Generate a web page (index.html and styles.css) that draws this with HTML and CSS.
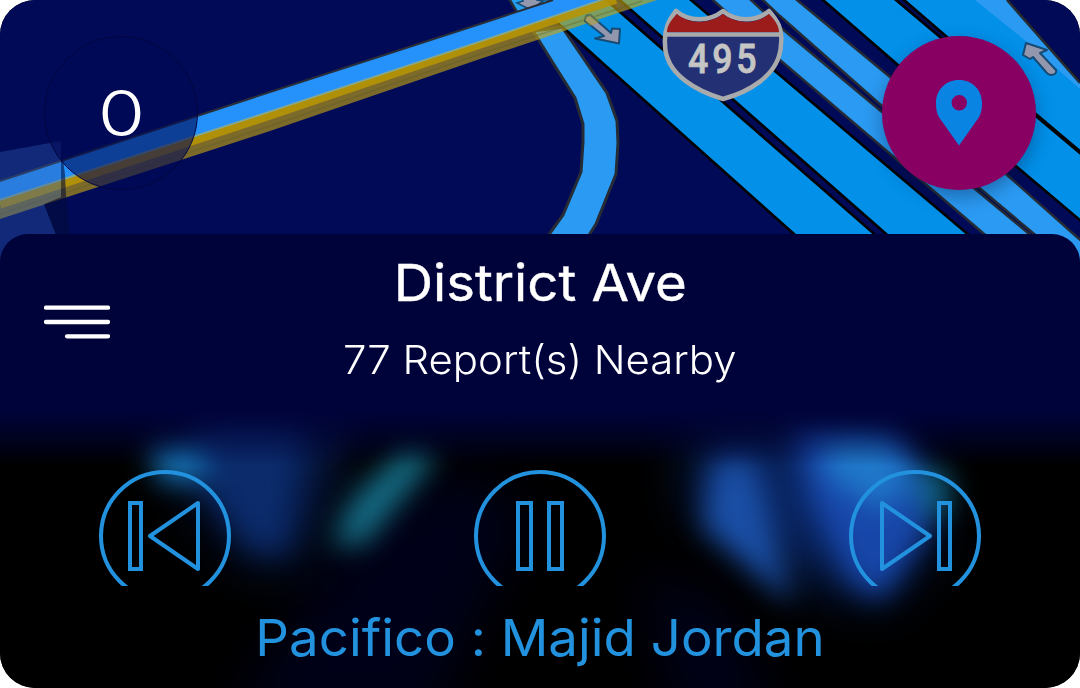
FILE: index.html
```html
<!DOCTYPE html>
<html lang="en">
<head>
<meta charset="utf-8">
<title>Drive</title>
<link rel="stylesheet" href="styles.css">
</head>
<body>
<main class="widget">
  <section class="map">
    <svg class="map-art" viewBox="0 0 1080 270" aria-hidden="true">
      <rect width="1080" height="270" fill="#000a57"/>
      <!-- highway lanes -->
      <g fill="#0290e9" stroke="#000" stroke-width="2.6">
        <path d="M532 0L794 234L830 266L911 266L612 5L600 -8Z"/>
        <path d="M614 -5L885 233L920 264L1003 264L691 0L680 -9Z"/>
        <path d="M813 -9L823 0L898 65L1017 167L1100 237V170L1037 117L940 37L896 0L884 -10Z"/>
        <path d="M894 -9L904 0L947 37L1037 115L1100 168V105L1007 0L998 -10Z"/>
      </g>
      <path d="M975 0L1027 42L1080 89V83L1007 0Z" fill="#2b9af2"/>
      <path d="M1007 0L1080 83" stroke="#262c36" stroke-width="2.6"/>
      <g fill="#2b9af2" stroke="#262c36" stroke-width="2.4">
        <path d="M703 -9L713 0L780 60L983 233L1020 265H1067L1028 233L882 112L780 27L751 0L740 -9Z"/>
        <path d="M752 -9L763 0L780 16L882 106L1033 233L1070 264H1108L1078 238L1007 175L890 77L797 0L786 -9Z"/>
      </g>
      <!-- ramp -->
      <path d="M562 27L607 93L617 121L618 143L616 174L596 224L586 240H545L563 215L581 172L583 142L583 124L575 98L553 63L533 31Z" fill="#2b9af2" stroke="#262c36" stroke-width="3"/>
      <path d="M566 30L600 61" stroke="#000" stroke-width="2.6"/>
      <path d="M508 -3L518 14L560 0Z" fill="#24a0ee" stroke="#262c36" stroke-width="2.6"/>
      <path d="M523 -8V1L517 3L531 10L543 1L537 0V-8Z" fill="#9297ad" stroke="#174b75" stroke-width="1.6"/>
      <!-- toll road -->
      <path d="M0 181L197 116L270 92L480 24L553 0H608L480 43L270 113L0 201Z" fill="#2591fa"/>
      <path d="M0 181L197 116L270 92L480 24L553 0" fill="none" stroke="#282d38" stroke-width="2"/>
      <path d="M0 199L270 111L480 41L600 0H657L480 59L270 131L0 219Z" fill="#c7a70e" fill-opacity=".62"/>
      <path d="M0 205L270 116L480 45L616 0" fill="none" stroke="#b79405" stroke-width="7.5" stroke-opacity=".88"/>
      <path d="M0 200L270 111.500L480 41.500L601 0" fill="none" stroke="#80a897" stroke-width="1.8"/>
      <path d="M0 214L270 126L480 54L642 1" fill="none" stroke="#5f5a28" stroke-width="1.5" stroke-opacity=".35"/>
      <!-- building -->
      <path d="M61 141L65 175L66 195L70 236H56L44 204L61 197Z" fill="#030c38" fill-opacity=".6"/>
      <path d="M0 152L61 141V197L44 204L58 240V270H0Z" fill="#2f5db3" fill-opacity=".38"/>
      <!-- direction arrows -->
      <g fill="#9297ad" stroke="#174b75" stroke-width="2" stroke-linejoin="round">
        <path d="M585 19Q586 14 591 15.500L611 33L612 28.500L620 29L619 43.500L595 38.500L604 36L585 21Z"/>
        <path d="M1026 43L1047 50L1040 53L1056 70Q1057 74 1052 75Q1048 75 1046 72L1033 57L1030 59L1023 55Z"/>
      </g>
      <path d="M583 19Q586 13 592 15L600 22L590 26Z" fill="#bda414" fill-opacity=".45"/>
      <!-- route shield -->
      <path d="M676 11C689 22 709 22 723 11C736 22 756 22 769 11C777 20 783 29 781 44C780 77 745 93 723 99C700 92 665 76 665 44C664 29 669 20 676 11Z" fill="#243074" stroke="#a8aaac" stroke-width="4.500" stroke-linejoin="round"/>
      <path d="M677 14C690 25 710 24 723 14C736 24 756 25 769 14C775 20 779 26 779 32H667C667 26 671 20 677 14Z" fill="#9c1b1b"/>
      <path d="M667 34.500H780" stroke="#a8aaac" stroke-width="4.500"/>
      <text class="shield-number" transform="translate(688 73) scale(.87 1)">495</text>
    </svg>
    <div class="map-controls">
      <div class="speed"><span class="speed-value">0</span></div>
      <button class="pin-button" aria-label="Report location">
        <svg class="pin" viewBox="0 0 46 66"><path fill="#0984e3" fill-rule="evenodd" d="M23 0C9.500 0 0 10 0 23C0 32 2 36 5 40L23 65.500L41 40C44 36 46 32 46 23C46 10 36.500 0 23 0ZM23.300 15A7.700 7.700 0 1 1 23.300 30.400A7.700 7.700 0 1 1 23.300 15Z"/></svg>
      </button>
    </div>
  </section>
  <section class="panel">
    <svg class="menu" viewBox="0 0 66 34"><g stroke="#fff" stroke-width="4.300" stroke-linecap="round"><path d="M2 2.700H64M2 17H64M23 31.300H64"/></g></svg>
    <div class="place">
      <h1 class="street"><span class="fit">District Ave</span></h1>
      <p class="reports"><span class="fit">77 Report(s) Nearby</span></p>
    </div>
  </section>
  <section class="player">
    <svg class="player-art" viewBox="0 410 1080 278" aria-hidden="true">
      <defs>
        <filter id="soft" x="-100%" y="-100%" width="300%" height="300%" color-interpolation-filters="sRGB"><feGaussianBlur stdDeviation="14"/></filter>
        <filter id="haze" x="-50%" y="-50%" width="200%" height="200%" color-interpolation-filters="sRGB"><feGaussianBlur stdDeviation="26"/></filter>
        <linearGradient id="fade" x1="0" y1="0" x2="0" y2="1"><stop offset="0" stop-color="#00033a"/><stop offset=".3" stop-color="#00033a" stop-opacity=".75"/><stop offset="1" stop-color="#00033a" stop-opacity="0"/></linearGradient>
      </defs>
      <rect y="410" width="1080" height="278" fill="#000"/>
      <g filter="url(#haze)" fill="#000118">
        <path d="M370 500L460 470L530 510L430 720H230Z"/>
        <path d="M640 570L720 600L780 720H680Z"/>
      </g>
      <g filter="url(#haze)">
        <path d="M180 410H350L300 560L250 560L190 480Z" fill="#071d52"/>
        <path d="M700 430H900L930 540L880 600L790 570L690 500Z" fill="#08235f"/>
      </g>
      <g filter="url(#soft)">
        <path d="M200 410H300L285 552L250 548L200 480Z" fill="#0c2e70" fill-opacity=".85"/>
        <path d="M150 444L200 444L208 480L160 482Z" fill="#1674b8"/>
        <path d="M405 448L437 456L362 546L332 544L352 500Z" fill="#15708a"/>
        <path d="M715 460L752 460L768 510L792 606L765 580L702 525Z" fill="#1a4fa6"/>
        <path d="M790 415L890 420L930 480L928 530L880 600L850 580L810 500Z" fill="#1849ae" fill-opacity=".95"/>
        <path d="M825 430L885 430L915 480L880 510L825 475Z" fill="#2284d2" fill-opacity=".8"/>
        <path d="M915 470L948 470L950 512L924 518Z" fill="#126c88" fill-opacity=".9"/>
      </g>
      <rect y="410" width="1080" height="56" fill="url(#fade)"/>
    </svg>
    <div class="controls">
      <svg class="control" viewBox="0 0 132 116"><g fill="none" stroke="#2392de" stroke-width="4"><circle cx="66" cy="66" r="64"/><path d="M31 33H42V99H31Z"/><path d="M99 33V99L51 66Z" stroke-linejoin="round"/></g></svg>
      <svg class="control" viewBox="0 0 132 116"><g fill="none" stroke="#2392de" stroke-width="4"><circle cx="66" cy="66" r="64"/><path d="M44 33H57V99H44ZM75 33H88V99H75Z"/></g></svg>
      <svg class="control" viewBox="0 0 132 116"><g fill="none" stroke="#2392de" stroke-width="4"><circle cx="66" cy="66" r="64"/><path d="M90 33H101V99H90Z"/><path d="M33 33V99L81 66Z" stroke-linejoin="round"/></g></svg>
    </div>
    <p class="track"><span class="fit">Pacifico : Majid Jordan</span></p>
  </section>
</main>
</body>
</html>
```
FILE: styles.css
```css
* { box-sizing: border-box; }
body { margin: 0; background: #fff; font-family: Inter, sans-serif; font-feature-settings: "calt" 0; }
h1, p { margin: 0; }
.widget { display: flex; flex-direction: column; width: 1080px; height: 688px; overflow: hidden; border-radius: 35px; background: #000; }
.map { position: relative; height: 270px; margin-bottom: -36px; }
.map-art { position: absolute; inset: 0; width: 1080px; height: 270px; }
.shield-number { font: 500 41px Roboto, sans-serif; letter-spacing: 4.5px; fill: #c5c5c5; stroke: #c5c5c5; stroke-width: .8px; }
.map-controls { position: relative; display: flex; justify-content: space-between; padding: 36px 44px 0; }
.speed, .pin-button { display: flex; align-items: center; justify-content: center; width: 154px; height: 154px; border-radius: 50%; }
.speed { background: rgba(0, 9, 85, .6); border: 1.5px solid #02063f; color: #fff; }
.speed-value { font-size: 63px; font-weight: 300; line-height: 1; transform: scaleX(1.22); }
.pin-button { padding: 0; border: 0; background: #880061; box-shadow: 0 7px 18px rgba(0, 20, 50, .35); }
.pin { width: 46px; height: 66px; }
.panel { position: relative; display: grid; grid-template-columns: 66px 1fr 66px; height: 176px; padding: 0 44px; border-radius: 28px 28px 0 0; background: #00033a; color: #fff; }
.menu { width: 66px; height: 34px; margin-top: 71px; }
.place { display: flex; flex-direction: column; align-items: center; padding-top: 16px; }
.fit { display: inline-block; white-space: nowrap; }
.street { font-size: 51px; font-weight: 400; line-height: 66px; -webkit-text-stroke: .4px #fff; }
.street .fit { transform: scaleX(1.068); }
.reports { font-size: 40px; font-weight: 300; line-height: 54px; margin-top: 17px; }
.reports .fit { transform: scaleX(1.048); }
.player { position: relative; height: 278px; }
.player-art { position: absolute; inset: 0; width: 1080px; height: 278px; }
.controls { position: relative; display: flex; justify-content: space-between; padding: 60px 99px 0; }
.control { width: 132px; height: 116px; }
.track { position: relative; margin-top: 19px; color: #2392de; font-size: 51px; font-weight: 400; line-height: 66px; text-align: center; }
.track .fit { transform: scaleX(1.035); }
```
